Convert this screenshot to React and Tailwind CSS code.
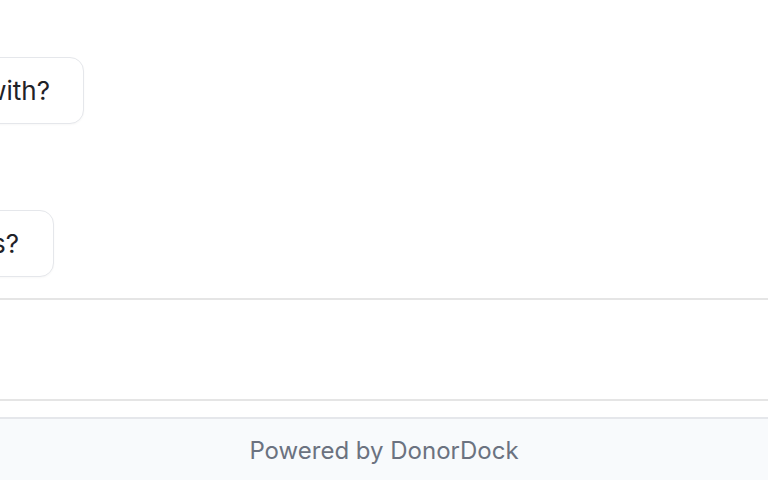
export default function App() {
  const suggestions = ["What can I help you with?", "What are your hours?"];

  return (
    <div className="h-[480px] w-[768px] overflow-hidden bg-white flex flex-col font-['Inter',_'Noto_Sans',_sans-serif]">
      {/* Messages */}
      <div className="h-[298px] shrink-0 pt-[57px]">
        <div className="flex flex-col items-end w-[84px]">
          <div className="h-[67px] shrink-0 flex items-center whitespace-nowrap rounded-[14px] border border-[#e5e7eb] bg-white pl-[18px] pr-[33px] text-[26px] text-[#1f2228] shadow-[0_1px_2px_rgba(0,0,0,0.03)]">
            {suggestions[0]}
          </div>
        </div>
        <div className="flex flex-col items-end w-[54px] mt-[86px]">
          <div className="h-[67px] shrink-0 flex items-center whitespace-nowrap rounded-[14px] border border-[#e5e7eb] bg-white pl-[18px] pr-[34px] text-[26px] text-[#1f2228] shadow-[0_1px_2px_rgba(0,0,0,0.03)]">
            {suggestions[1]}
          </div>
        </div>
      </div>

      {/* Input area */}
      <div className="h-[103px] shrink-0 border-y-2 border-[#e5e5e5] bg-white" />

      <div className="h-[16px] shrink-0 bg-white" />

      {/* Footer */}
      <div className="flex-1 border-t-2 border-[#e5e7eb] bg-[#f8fafc] flex items-center justify-center pt-[2px]">
        <span className="text-[24px] text-[#6b7280]">Powered by DonorDock</span>
      </div>
    </div>
  );
}
